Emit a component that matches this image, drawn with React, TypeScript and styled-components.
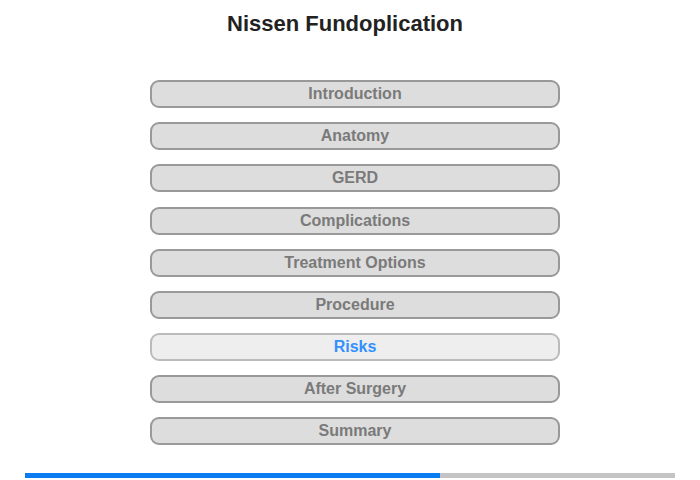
import React from "react";
import styled, { createGlobalStyle } from "styled-components";

const Global = createGlobalStyle`
  html, body { margin: 0; padding: 0; background: #fff; }
  body { font-family: "Liberation Sans", Arial, sans-serif; }
`;

const Page = styled.div`
  width: 700px;
  height: 480px;
  display: flex;
  flex-direction: column;
`;

const Title = styled.h1`
  margin: 11px 0 0 0;
  padding-right: 10px;
  font-size: 22px;
  line-height: 26px;
  font-weight: bold;
  color: #222;
  text-align: center;
`;

const Nav = styled.nav`
  margin: 43.3px 0 0 150px;
  width: 410px;
  display: flex;
  flex-direction: column;
  gap: 14.1px;
`;

const NavButton = styled.button<{ $active?: boolean }>`
  box-sizing: border-box;
  height: 28px;
  width: 100%;
  padding: 0;
  border: 2px solid ${(p) => (p.$active ? "#bbbbbb" : "#999999")};
  border-radius: 9px;
  background: ${(p) => (p.$active ? "#eeeeee" : "#dddddd")};
  color: ${(p) => (p.$active ? "#3390ff" : "#7a7a7a")};
  font-family: "Liberation Sans", Arial, sans-serif;
  font-size: 16px;
  font-weight: bold;
  line-height: 24px;
  text-align: center;
  cursor: pointer;
`;

const Progress = styled.div`
  margin: 28px 25px 0 25px;
  height: 5px;
  background: #c4c4c4;
  display: flex;
`;

const ProgressFill = styled.div`
  height: 100%;
  background: #0a7cf2;
`;

const items = [
  "Introduction",
  "Anatomy",
  "GERD",
  "Complications",
  "Treatment Options",
  "Procedure",
  "Risks",
  "After Surgery",
  "Summary",
];

export default function App() {
  const progress = 415 / 650;
  return (
    <>
      <Global />
      <Page>
        <Title>Nissen Fundoplication</Title>
        <Nav>
          {items.map((it) => (
            <NavButton key={it} $active={it === "Risks"}>
              {it}
            </NavButton>
          ))}
        </Nav>
        <Progress>
          <ProgressFill style={{ width: `${progress * 100}%` }} />
        </Progress>
      </Page>
    </>
  );
}
